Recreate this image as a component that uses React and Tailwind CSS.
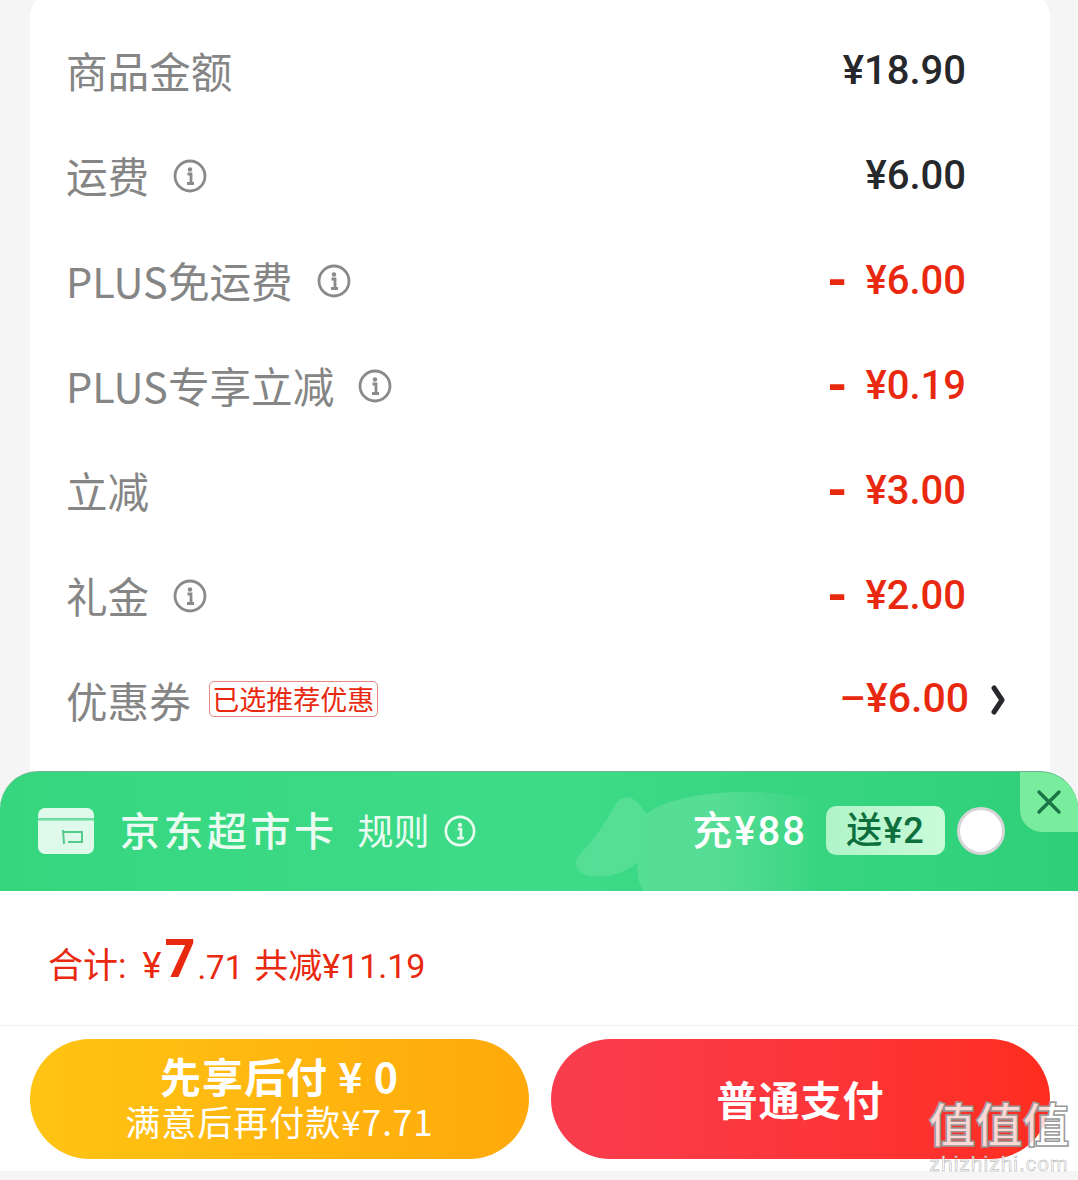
import React from 'react';

const cjk = "font-['Noto_Sans_CJK_SC','Noto_Sans',sans-serif]";
const num = "font-['Roboto','Noto_Sans_CJK_SC',sans-serif]";

const InfoIcon = ({ color = '#8a8a8a', size = 34 }) => (
  <svg width={size} height={size} viewBox="0 0 34 34" fill="none">
    <circle cx="17" cy="17" r="15" stroke={color} strokeWidth="2.8" />
    <circle cx="17" cy="10.5" r="2.2" fill={color} />
    <path d="M14.5 15h3.5v9.5M14 24.5h7" stroke={color} strokeWidth="2.8" />
  </svg>
);

const rows = [
  { label: '商品金额', value: '¥18.90' },
  { label: '运费', value: '¥6.00', info: true },
  { label: 'PLUS免运费', value: '¥6.00', info: true, red: true },
  { label: 'PLUS专享立减', value: '¥0.19', info: true, red: true },
  { label: '立减', value: '¥3.00', red: true },
  { label: '礼金', value: '¥2.00', info: true, red: true },
];

const Row = ({ label, value, info, red }) => (
  <div className="flex h-[105px] items-center justify-between pr-[84px]">
    <div className="flex items-center gap-[24px]">
      <span className="mt-[2px] text-[41.6px] leading-none text-[#858585]">{label}</span>
      {info && <div className="mt-[2px]"><InfoIcon /></div>}
    </div>
    <div className={`${num} mt-[2px] flex items-center gap-[18px] text-[40px] font-medium leading-none ${red ? 'text-[#e9290f]' : 'text-[#26282b]'}`}>
      {red && <span className="text-[52px] font-bold">-</span>}
      <span>{value}</span>
    </div>
  </div>
);

export default function App() {
  return (
    <div className={`relative flex h-[1180px] w-[1078px] flex-col overflow-hidden bg-[#f5f5f5] ${cjk}`}>
      {/* Price detail card */}
      <div className="ml-[30px] -mt-[10px] h-[790px] w-[1020px] shrink-0 rounded-t-[28px] bg-white pl-[36px] pt-[27px]">
        {rows.map((r) => (
          <Row key={r.label} {...r} />
        ))}
        <div className="flex h-[105px] items-center justify-between pr-[44px]">
          <div className="flex items-center gap-[18px]">
            <span className="mt-[2px] text-[41.6px] leading-none text-[#858585]">优惠券</span>
            <span className="-mt-[2px] flex h-[36px] w-[169px] items-center justify-center rounded-[5px] border border-[#e58a80] text-[27px] leading-none text-[#e9290f]">
              已选推荐优惠
            </span>
          </div>
          <div className="-mt-[2px] flex items-center gap-[21px]">
            <span className={`${num} text-[41px] font-medium leading-none text-[#e9290f]`}>–¥6.00</span>
            <svg className="mt-[2px]" width="16" height="30" viewBox="0 0 16 30" fill="none">
              <path d="M4 3l8 12-8 12" stroke="#26282b" strokeWidth="5" strokeLinecap="round" strokeLinejoin="round" />
            </svg>
          </div>
        </div>
      </div>

      {/* Supermarket card banner */}
      <div className="relative -mt-[9px] flex h-[120px] shrink-0 items-center justify-between overflow-hidden rounded-t-[38px] border-t border-[#6fb594] bg-gradient-to-r from-[#36d67f] via-[#3edb88] to-[#2fcf79] pb-[2px] pl-[38px] pr-[73px]">
        <svg className="absolute left-[570px] top-[18px]" width="480" height="102" viewBox="0 0 480 102" fill="none">
          <defs>
            <linearGradient id="fish" x1="0" y1="0" x2="1" y2="0">
              <stop offset="0" stopColor="#8ce8b6" stopOpacity="0.3" />
              <stop offset="0.4" stopColor="#8ce8b6" stopOpacity="0.35" />
              <stop offset="0.72" stopColor="#8ce8b6" stopOpacity="0" />
            </linearGradient>
          </defs>
          <path d="M10 64C26 48 38 28 46 14c9-12 20-8 30 10 16-12 44-20 90-22 60-2 110 14 136 38 4-14 16-26 26-22 10 6 14 20 20 38 4 14 2 32-6 46H74c-6-10-8-20-6-30-14 12-32 16-48 14C6 84 2 72 10 64z" fill="url(#fish)" />
        </svg>
        <div className="relative flex items-center">
          <svg width="56" height="46" viewBox="0 0 56 46" fill="none">
            <rect width="56" height="46" rx="7" fill="#dff9ea" />
            <rect y="10" width="56" height="2.5" fill="#6fdca0" />
            <path d="M25 22l1 14M25 24h19v10H30" stroke="#56c98c" strokeWidth="2" />
          </svg>
          <span className="-mt-[4px] ml-[26px] text-[40px] font-medium leading-none tracking-[3.5px] text-[#eafcf2]">京东超市卡</span>
          <span className="-mt-[4px] ml-[20px] text-[36px] leading-none text-[#eafcf2]">规则</span>
          <div className="ml-[14px]"><InfoIcon color="#eafcf2" size={32} /></div>
        </div>
        <div className="relative flex items-center">
          <span className={`${num} mt-[3px] text-[40px] font-medium leading-none tracking-[2px] text-white`}>充¥88</span>
          <span className={`${num} ml-[19px] flex h-[49px] w-[119px] items-center justify-center rounded-[10px] bg-gradient-to-r from-[#b0f4c8] to-[#c9fbd9] text-[36px] font-medium leading-none tracking-[1px] text-[#0e6f3e]`}>
            送¥2
          </span>
          <span className="ml-[12px] h-[48px] w-[48px] rounded-full border-[3px] border-[#d6d6d6] bg-white" />
        </div>
        {/* close corner */}
        <div className="absolute right-0 top-0 flex h-[60px] w-[58px] items-center justify-center rounded-bl-[22px] bg-[#7aec9e]">
          <svg width="26" height="26" viewBox="0 0 26 26" fill="none">
            <path d="M3 3l20 20M23 3L3 23" stroke="#1a7445" strokeWidth="3.4" strokeLinecap="round" />
          </svg>
        </div>
      </div>

      {/* Total */}
      <div className={`${num} flex h-[134px] shrink-0 items-center bg-white pl-[48px] pt-[16px] text-[#e9290f]`}>
        <span className="text-[35px] leading-none">合计:</span>
        <span className="ml-[16px] text-[36px] leading-none">¥</span>
        <span className="-mt-[14px] ml-[3px] text-[54px] font-bold leading-none">7</span>
        <span className="mt-[2px] ml-[2px] text-[33px] leading-none">.71</span>
        <span className="ml-[11px] text-[34px] leading-none">共减¥11.19</span>
      </div>

      {/* Pay buttons */}
      <div className="flex h-[146px] shrink-0 items-center gap-[22px] border-t border-[#f0f0f0] bg-white pl-[30px] pr-[28px]">
        <button className="flex h-[120px] w-[499px] flex-col items-center justify-center rounded-full bg-gradient-to-r from-[#ffc414] to-[#ffa90a] pb-[7px] text-white">
          <span className="text-[41px] font-bold leading-[52px] tracking-[1px]">先享后付 ¥ 0</span>
          <span className="text-[35px] leading-[40px] tracking-[1px]">满意后再付款¥7.71</span>
        </button>
        <button className="flex h-[120px] w-[499px] items-center justify-center rounded-full bg-gradient-to-r from-[#f93d4e] to-[#ff2d1e] text-[41px] font-bold tracking-[1px] text-white">
          普通支付
        </button>
      </div>

      {/* Watermark */}
      <div className="absolute left-[924px] top-[1092px] flex w-[150px] flex-col items-center text-white">
        <span className="text-[47px] font-bold leading-[60px] text-[#ffffffd0] [-webkit-text-stroke:1.5px_#999]">值值值</span>
        <span className="font-['Liberation_Sans',sans-serif] text-[21px] leading-[24px] tracking-[1px] text-[#ffffffd9] [-webkit-text-stroke:0.5px_#aaa]">zhizhizhi.com</span>
      </div>
    </div>
  );
}
